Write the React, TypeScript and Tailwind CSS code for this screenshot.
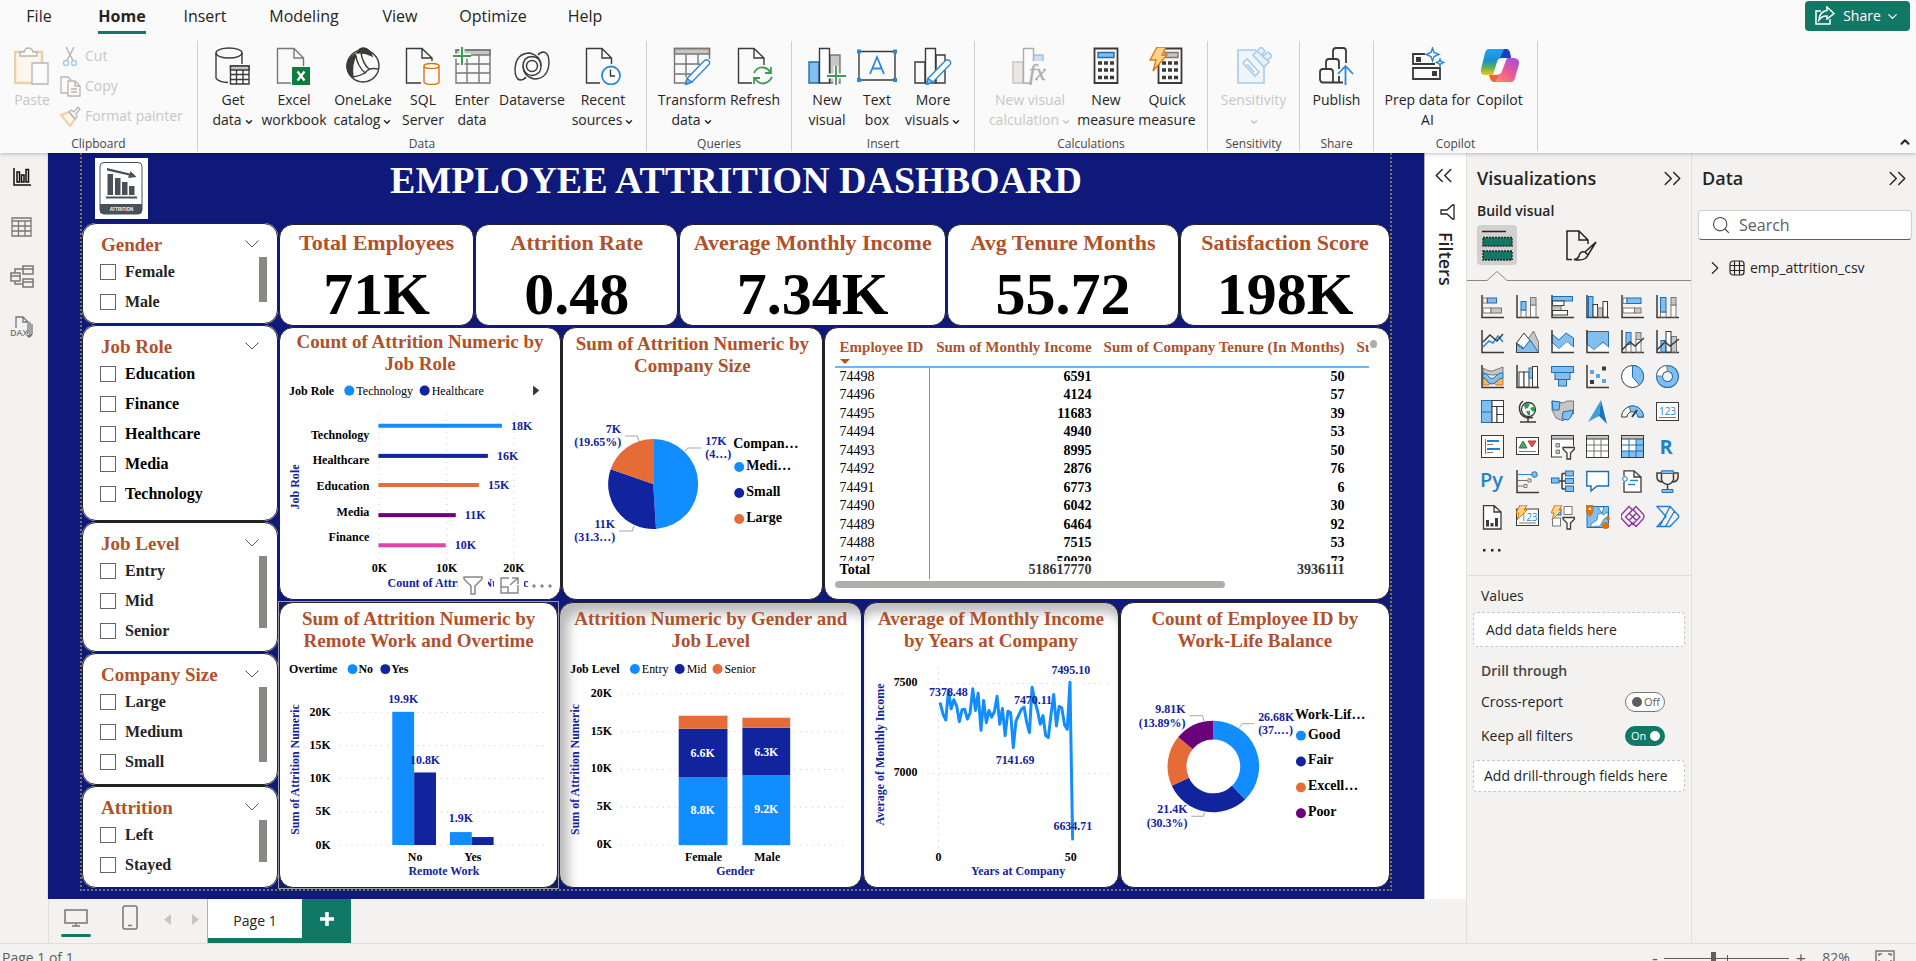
import React from "react";
import { ChevronDown, ChevronUp, ChevronsLeft, ChevronsRight, ChevronRight, Search } from "lucide-react";

const SANS = "font-['Open_Sans','Noto_Sans',sans-serif]";
const SERIF = "font-['Liberation_Serif','Times_New_Roman',serif]";

const BLUE = "#118DFF";
const NAVY = "#12239E";
const ORANGE = "#E66C37";
const PURPLE = "#6B007B";
const PINK = "#E044A7";

const ink = "#3b3a39";
const grey = "#797775";
const fillGrey = "#c8c6c4";
const sky = "#83beec";
const deep = "#1a6fb5";

/* ---------- Ribbon ---------- */

type IconProps = { children: React.ReactNode; w?: number; faded?: boolean };
const RibbonIcon = ({ children, w = 36, faded }: IconProps) => (
  <svg width={w} height="38" viewBox={`0 0 ${w} 38`} fill="none" stroke={ink} strokeWidth="1.4" className={faded ? "opacity-40" : ""} aria-hidden="true">
    {children}
  </svg>
);

const pencil = (
  <>
    <path d="M14 31.500L31.500 13.500Q33.500 12 35.500 13.500Q37.500 15.500 36 17.500L19 35L12.500 37.500Z" fill="#fff" stroke="#2b88d8" />
    <path d="M14 31.500L19 35L12.500 37.500Z" fill={sky} stroke="#2b88d8" />
  </>
);

const icons = {
  getData: (
    <RibbonIcon>
      <ellipse cx="14" cy="6" rx="13" ry="5" />
      <path d="M1 6V31Q3 35 13 35.500M27 6V17" />
      <path d="M15.500 19H34V37H15.500Z" fill="#fff" />
      <path d="M15.500 19H34V23H15.500Z" fill={fillGrey} />
      <path d="M21.500 23V37M28 23V37M15.500 27.500H34M15.500 32.500H34" />
    </RibbonIcon>
  ),
  excel: (
    <RibbonIcon>
      <path d="M15 36H1.500V1.500H18L27.500 11V19M18 1.500V11H27.500" stroke={grey} />
      <rect x="16" y="20" width="18" height="18" fill="#107c41" stroke="none" />
      <path d="M21.500 24.500L28.500 33.500M28.500 24.500L21.500 33.500" stroke="#fff" strokeWidth="2.200" />
    </RibbonIcon>
  ),
  oneLake: (
    <RibbonIcon>
      <circle cx="18" cy="19" r="16" />
      <path d="M12 6Q14 1 19 1Q25 2 27 9Q20 5 12 6ZM10 7Q1 13 2 21Q3 27 8 30Q6 17 11 9Z" fill={ink} />
      <path d="M11 9Q12 18 20 26Q24 20 33 22M20 26Q15 29 8 30M16 6Q18 17 24 22" />
    </RibbonIcon>
  ),
  sql: (
    <RibbonIcon>
      <path d="M16 36H1.500V1.500H17L27 11V14M17 1.500V11H27" />
      <path d="M19 19V35Q20 37.500 26.500 37.500Q33 37.500 34 35V19" fill="#fff" stroke="#d9730d" />
      <ellipse cx="26.500" cy="19" rx="7.500" ry="2.500" fill="#fff" stroke="#d9730d" />
    </RibbonIcon>
  ),
  enter: (
    <RibbonIcon w={40}>
      <path d="M4 3H38V8H4Z" fill={fillGrey} stroke={grey} />
      <path d="M4 3H38V36H4ZM4 17H38M4 26H38M15 8V36M27 8V36" stroke={grey} />
      <path d="M10 0V19M0 9H19" stroke="#fafafa" strokeWidth="5" />
      <path d="M10 0V18M1 9H19" stroke="#3f9a55" strokeWidth="2" />
    </RibbonIcon>
  ),
  dataverse: (
    <RibbonIcon>
      <circle cx="18" cy="19" r="5.500" />
      <path d="M27 19Q27 10 18 9.500Q9 10 9 19Q9 29 20 32Q34 32 35 16Q35 6 30 5Q26 5 24 8" />
      <path d="M9 19Q10 28 18 28.500Q27 28 27 19Q27 9 16 6Q2 6 1 22Q1 32 6 33Q10 33 12 30" />
    </RibbonIcon>
  ),
  recent: (
    <RibbonIcon>
      <path d="M15 36H1.500V1.500H17L26.500 11V17M17 1.500V11H26.500" />
      <circle cx="26" cy="28.500" r="9" fill="#fff" stroke="#2b88d8" strokeWidth="1.800" />
      <path d="M25.500 22.500V29H30" />
    </RibbonIcon>
  ),
  transform: (
    <RibbonIcon w={39}>
      <path d="M1.500 1.500H36.500V7H1.500Z" fill={fillGrey} stroke={grey} />
      <path d="M14 36H1.500V1.500H36.500V12M1.500 17H27M1.500 27H18M13 7V30M25 7V18" stroke={grey} />
      {pencil}
    </RibbonIcon>
  ),
  refresh: (
    <RibbonIcon>
      <path d="M15 36H1.500V1.500H17L27 11V18M17 1.500V11H27" />
      <path d="M17 26Q20 20 26 20.500Q31 21 33 25M34 20V26H28M35 30Q32 36 26 36.500Q20 36 18 31M17 37V31H23" stroke="#3f9a55" strokeWidth="1.800" />
    </RibbonIcon>
  ),
  newVisual: (
    <RibbonIcon w={38}>
      <path d="M1 15H11V36H1Z" fill={sky} stroke={deep} />
      <path d="M22 8H32V36H22Z" fill={fillGrey} stroke={grey} />
      <path d="M11.500 1.500H21.500V36H11.500Z" fill="#fff" />
      <path d="M28 19V38M18 29H38" stroke="#fafafa" strokeWidth="5" />
      <path d="M28 19V38M19 29H38" stroke="#3f9a55" strokeWidth="1.800" />
    </RibbonIcon>
  ),
  textBox: (
    <RibbonIcon w={40}>
      <path d="M2 4.500H38V33H2Z" fill="#fafafa" />
      <path d="M13 27L20 10L27 27M15.500 21.500H24.500" stroke="#2b88d8" strokeWidth="1.800" />
      <path d="M0 2.500H4V6.500H0ZM36 2.500H40V6.500H36ZM0 31H4V35H0ZM36 31H40V35H36Z" fill="#2b88d8" stroke="none" />
    </RibbonIcon>
  ),
  moreVisuals: (
    <RibbonIcon w={38}>
      <path d="M1 15H11V36H1ZM22 8H31V36H22Z" />
      <path d="M11.500 1.500H21.500V36H11.500Z" fill="#fff" />
      {pencil}
    </RibbonIcon>
  ),
  calc: (
    <RibbonIcon w={38} faded>
      <path d="M2 15H12V36H2Z" fill="#d0cecc" stroke={grey} />
      <path d="M22 8H32V18H22Z" fill={sky} stroke={deep} />
      <path d="M12.500 1.500H22.500V36H12.500Z" fill="#fff" />
      <path d="M21 14H36V38H21Z" fill="#fafafa" stroke="none" />
      <text x="18" y="33" fontFamily="Liberation Serif" fontStyle="italic" fontSize="23" fill={ink} stroke={ink} strokeWidth="0.500">fx</text>
    </RibbonIcon>
  ),
  measure: (
    <RibbonIcon w={28}>
      <path d="M2.500 1.500H25.500V36H2.500Z" strokeWidth="1.800" />
      <path d="M6 5.500H22V10.500H6Z" fill={sky} stroke={deep} />
      <path d="M6 16H22M6 23H22M6 30.500H22" strokeWidth="3.500" strokeDasharray="4 2" />
    </RibbonIcon>
  ),
  quick: (
    <RibbonIcon>
      <path d="M9.500 1.500H32.500V36H9.500Z" strokeWidth="1.800" />
      <path d="M16 5.500H29V10.500H16Z" fill={fillGrey} stroke={grey} />
      <path d="M13 16H29M13 23H29M13 30.500H29" strokeWidth="3.500" strokeDasharray="4 2" />
      <path d="M8 0H17L13 8H18L4 24L7 13H1Z" fill="#ffd28a" stroke="#e07b10" />
    </RibbonIcon>
  ),
  sensitivity: (
    <RibbonIcon faded>
      <g stroke="#2b88d8" strokeWidth="1.600">
        <path d="M20 3H2V36H28V20" fill="#e3f0fa" />
        <path d="M7 16L11 12L23 25L19 29ZM11 17L18 25" fill="#fff" />
        <path d="M17 8L21 4L33 15L28 20ZM21 4L25 0L29 4L26 8M27 9L32 5L36 9L31 14" fill="#cfe6f7" />
      </g>
    </RibbonIcon>
  ),
  publish: (
    <RibbonIcon>
      <path d="M15 35.500H4Q1 35.500 1 32V25Q1 22 4 22H11Q14 22 14 25V35.500M7 22V15Q7 12 10 12H17Q20 12 20 15V22M14 12V4Q14 1 17 1H24Q27 1 27 4V16M14 35.500H24M20 29V35" strokeWidth="1.800" />
      <path d="M26.500 38V20M19 27L26.500 19L34 27" stroke="#2b88d8" strokeWidth="1.800" />
    </RibbonIcon>
  ),
  prep: (
    <RibbonIcon w={34}>
      <path d="M14 7H2V17H24M2 21H29V32H2Z" strokeWidth="1.800" />
      <path d="M5 10H10V15H5ZM21 24H26V29H21Z" fill={ink} stroke="none" />
      <path d="M21.500 1L23 5.500L28 7.500L23 9.500L21.500 14L20 9.500L15 7.500L20 5.500ZM29 12L30 14.500L32.500 15.500L30 16.500L29 19L28 16.500L25.500 15.500L28 14.500Z" fill="#fafafa" stroke="#2b88d8" />
    </RibbonIcon>
  ),
  copilot: (
    <RibbonIcon w={40}>
      <defs>
        <linearGradient id="cpA" x1="0" y1="0" x2="0" y2="1"><stop offset="0" stopColor="#1ba7f0" /><stop offset="0.450" stopColor="#1c8fd0" /><stop offset="0.700" stopColor="#59b05a" /><stop offset="1" stopColor="#f5c518" /></linearGradient>
        <linearGradient id="cpB" x1="1" y1="0" x2="0" y2="1"><stop offset="0" stopColor="#9a4be8" /><stop offset="0.500" stopColor="#ee5a92" /><stop offset="1" stopColor="#ffa24a" /></linearGradient>
      </defs>
      <g stroke="none">
        <path d="M9 2H26Q29 2 30 6L31 11H22Q18 11 17 15L13 28H5Q0 28 1 22L5 6Q6 2 9 2Z" fill="url(#cpA)" />
        <path d="M24 2H26Q29 2 30 6L31 11H22Q20 11 20 11Z" fill="#1740c4" />
        <path d="M31 35H15Q11 35 10 30L9 28H17Q21 28 22 24L27 11H34Q40 12 39 17L35 31Q34 35 31 35Z" fill="url(#cpB)" />
        <path d="M9 28H17L20 27L15 35Q11 35 10 31Z" fill="#f0603a" />
        <path d="M18.500 13H23L19 26Q18.500 28 14 28Z" fill="#fff" />
      </g>
    </RibbonIcon>
  ),
};

type Cmd = { icon: keyof typeof icons; lines: string[]; w: string; menu?: boolean; off?: boolean };
const groups: { name: string; w: string; items: Cmd[] }[] = [
  {
    name: "Data", w: "w-[449px]",
    items: [
      { icon: "getData", lines: ["Get", "data"], w: "w-[54px]", menu: true },
      { icon: "excel", lines: ["Excel", "workbook"], w: "w-[68px]" },
      { icon: "oneLake", lines: ["OneLake", "catalog"], w: "w-[70px]", menu: true },
      { icon: "sql", lines: ["SQL", "Server"], w: "w-[50px]" },
      { icon: "enter", lines: ["Enter", "data"], w: "w-[48px]" },
      { icon: "dataverse", lines: ["Dataverse"], w: "w-[72px]" },
      { icon: "recent", lines: ["Recent", "sources"], w: "w-[70px]", menu: true },
    ],
  },
  {
    name: "Queries", w: "w-[145px]",
    items: [
      { icon: "transform", lines: ["Transform", "data"], w: "w-[72px]", menu: true },
      { icon: "refresh", lines: ["Refresh"], w: "w-[54px]" },
    ],
  },
  {
    name: "Insert", w: "w-[183px]",
    items: [
      { icon: "newVisual", lines: ["New", "visual"], w: "w-[52px]" },
      { icon: "textBox", lines: ["Text", "box"], w: "w-[48px]" },
      { icon: "moreVisuals", lines: ["More", "visuals"], w: "w-[64px]", menu: true },
    ],
  },
  {
    name: "Calculations", w: "w-[233px]",
    items: [
      { icon: "calc", lines: ["New visual", "calculation"], w: "w-[88px]", menu: true, off: true },
      { icon: "measure", lines: ["New", "measure"], w: "w-[64px]" },
      { icon: "quick", lines: ["Quick", "measure"], w: "w-[58px]" },
    ],
  },
  { name: "Sensitivity", w: "w-[92px]", items: [{ icon: "sensitivity", lines: ["Sensitivity", ""], w: "w-[76px]", menu: true, off: true }] },
  { name: "Share", w: "w-[74px]", items: [{ icon: "publish", lines: ["Publish"], w: "w-[64px]" }] },
  {
    name: "Copilot", w: "w-[164px]",
    items: [
      { icon: "prep", lines: ["Prep data for", "AI"], w: "w-[88px]" },
      { icon: "copilot", lines: ["Copilot"], w: "w-[56px]" },
    ],
  },
];

function RibbonButton({ cmd }: { cmd: Cmd }) {
  return (
    <button disabled={cmd.off} className={`flex flex-col items-center gap-[5px] ${cmd.w} ${cmd.off ? "text-[#c8c6c4]" : "text-[#252423]"}`}>
      {icons[cmd.icon]}
      <span className="flex flex-col items-center text-sm leading-5 whitespace-nowrap">
        {cmd.lines.map((line, i) => (
          <span key={i} className="flex h-5 items-center">
            {line}
            {cmd.menu && i === cmd.lines.length - 1 && <ChevronDown size={10} strokeWidth={3.5} className="mt-1 ml-0.5" />}
          </span>
        ))}
      </span>
    </button>
  );
}

const tabs = [
  { name: "File", cls: "w-[62px] mr-[11px]" },
  { name: "Home", cls: "w-[82px]" },
  { name: "Insert", cls: "w-[84px]" },
  { name: "Modeling", cls: "w-[114px]" },
  { name: "View", cls: "w-[78px]" },
  { name: "Optimize", cls: "w-[108px]" },
  { name: "Help", cls: "w-[76px]" },
];

const groupLabel = "text-center text-xs leading-[14px] text-[#484644]";

function Ribbon() {
  return (
    <header className="relative z-20 h-[153px] shrink-0 bg-[#fafafa] text-[#252423] shadow-[0_1px_4px_rgba(0,0,0,0.25)]">
      <div className="flex h-[41px] items-start justify-between pr-1.5 pl-2">
        <nav className="flex text-base">
          {tabs.map((t) => (
            <button key={t.name} className={`flex h-[34px] flex-col items-center justify-between ${t.cls}`}>
              <span className={`flex h-8 items-center ${t.name === "Home" ? "font-bold" : ""}`}>{t.name}</span>
              {t.name === "Home" && <span className="h-[3px] w-12 bg-[#117865]" />}
            </button>
          ))}
        </nav>
        <button className="mt-px flex h-[30px] w-[105px] items-center justify-center gap-2 rounded bg-[#117865] text-sm text-white">
          <svg width="20" height="20" viewBox="0 0 20 20" fill="none" stroke="currentColor" strokeWidth="1.500" aria-hidden="true">
            <path d="M6 5H1V18H15V13M12 1L19 7.500L12 13V10Q7 9.500 4 14Q4.500 5.500 12 4.500Z" />
          </svg>
          <span className="flex items-center gap-1">Share <ChevronDown size={15} /></span>
        </button>
      </div>
      <div className="flex items-end">
        <section className="flex h-[110px] w-[198px] flex-col justify-between border-r border-[#d2d0ce] text-[#c8c6c4]">
          <div className="flex items-start">
            <button disabled className="flex w-[60px] flex-col items-center gap-[5px] pt-1.5 pl-1 text-sm leading-5">
              <svg width="36" height="38" viewBox="0 0 36 38" fill="none" strokeWidth="1.400" aria-hidden="true">
                <path d="M1 5H28V36H1Z" stroke="#f0cfa6" strokeWidth="2.500" fill="#fdf6ec" />
                <path d="M6 9V5H10Q11 1 14.500 1Q18 1 19 5H23V9Z" stroke="#b8b6b4" fill="#fafafa" />
                <path d="M18 16H34V37H18Z" stroke="#b8b6b4" fill="#fafafa" />
              </svg>
              Paste
            </button>
            <div className="flex flex-col text-sm">
              <button disabled className="flex h-[30px] items-center gap-1">
                <svg width="21" height="21" viewBox="0 0 21 21" fill="none" stroke="#b8b6b4" aria-hidden="true">
                  <path d="M6 1L13 14.500M14 1L7 14.500" strokeWidth="1.500" />
                  <circle cx="6" cy="17" r="2.500" stroke="#a9cbe6" strokeWidth="1.500" />
                  <circle cx="14" cy="17" r="2.500" stroke="#a9cbe6" strokeWidth="1.500" />
                </svg>
                Cut
              </button>
              <button disabled className="flex h-[30px] items-center gap-1">
                <svg width="21" height="21" viewBox="0 0 21 21" fill="none" stroke="#b8b6b4" strokeWidth="1.300" aria-hidden="true">
                  <path d="M8 17H1V1H8L11 4M8 5H15L20 10V20H8ZM15 5V10H20M11 13H17M11 16H17" />
                </svg>
                Copy
              </button>
              <button disabled className="flex h-[30px] items-center gap-1">
                <svg width="21" height="21" viewBox="0 0 21 21" fill="none" stroke="#b8b6b4" strokeWidth="1.300" aria-hidden="true">
                  <path d="M1 9L9 6L15 13L10 20Z" stroke="#f0cfa6" strokeWidth="2" fill="#fdf6ec" />
                  <path d="M9 6L11 4L14 6L18 1L20 3L16 8L17 11L15 13Z" />
                </svg>
                Format painter
              </button>
            </div>
          </div>
          <h2 className={groupLabel}>Clipboard</h2>
        </section>
        {groups.map((g) => (
          <section key={g.name} className={`flex h-[110px] flex-col justify-between border-r border-[#d2d0ce] ${g.w}`}>
            <div className="flex justify-center pt-1.5">
              {g.items.map((c, i) => <RibbonButton key={i} cmd={c} />)}
            </div>
            <h2 className={groupLabel}>{g.name}</h2>
          </section>
        ))}
        <button aria-label="Collapse ribbon" className="mr-1 mb-0.5 ml-auto"><ChevronUp size={14} strokeWidth={3.5} /></button>
      </div>
    </header>
  );
}

/* ---------- Left rail ---------- */

function Rail() {
  const b = "flex h-6 w-6 items-center justify-center";
  return (
    <nav className="flex w-12 shrink-0 flex-col items-center gap-[26px] border-r border-[#e1dfdd] bg-[#f3f2f1] pt-3 pr-1">
      <button aria-label="Report view" className={b}>
        <svg width="18" height="18" viewBox="0 0 18 18" fill="none" stroke="#111" strokeWidth="1.500"><path d="M1 0V17H18M4 4H6.500V14H4ZM8.500 7H11V14H8.500ZM13 1.500H15.500V14H13Z" /></svg>
      </button>
      <button aria-label="Table view" className={b}>
        <svg width="21" height="20" viewBox="0 0 21 20" fill="none" stroke={grey} strokeWidth="1.300"><path d="M1 1H20V19H1ZM1 4H20M1 9H20M1 14H20M7.500 4V19M14 4V19" /></svg>
      </button>
      <button aria-label="Model view" className={b}>
        <svg width="24" height="24" viewBox="0 0 24 24" fill="none" stroke={grey} strokeWidth="1.500"><path d="M13 1H23V9H13ZM13 4H23M13 14H23V22H13ZM13 17H23M1 8H10V16H1ZM1 11H10M5 8V4H13M5 16V19H13" /></svg>
      </button>
      <button aria-label="DAX query view" className={b}>
        <svg width="24" height="22" viewBox="0 0 24 22" fill="none" stroke={grey} strokeWidth="1.300">
          <path d="M6 12V1H13L18 6V17H17M13 1V6H18M20 6V18Q20 20 17 20M22 8V18Q21 21 18 21" />
          <text x="0" y="20" fontFamily="Open Sans" fontSize="9" fontWeight="600" fill={grey} stroke="none">DAX</text>
        </svg>
      </button>
    </nav>
  );
}

/* ---------- Report visuals ---------- */

const card = "relative flex min-h-0 min-w-0 flex-col overflow-hidden rounded-[14px] border border-[#252423] bg-white";

const slicers = [
  { title: "Gender", items: ["Female", "Male"], grow: "flex-[100_1_0%]", bar: "h-[45px]", ink: "text-[#252423]" },
  { title: "Job Role", items: ["Education", "Finance", "Healthcare", "Media", "Technology"], grow: "flex-[197_1_0%]", bar: "", ink: "text-black" },
  { title: "Job Level", items: ["Entry", "Mid", "Senior"], grow: "flex-[130_1_0%]", bar: "h-[72px]", ink: "text-[#252423]" },
  { title: "Company Size", items: ["Large", "Medium", "Small"], grow: "flex-[132_1_0%]", bar: "h-[75px]", ink: "text-[#252423]" },
  { title: "Attrition", items: ["Left", "Stayed"], grow: "flex-[101_1_0%]", bar: "h-[42px]", ink: "text-[#252423]" },
];

function Slicer({ s }: { s: (typeof slicers)[number] }) {
  return (
    <fieldset className={`${card} ${s.grow}`}>
      <div className="flex h-[33px] shrink-0 items-end justify-between pr-[18px] pl-[18px]">
        <span className="text-[19px] leading-6 font-bold text-[#b0512a]">{s.title}</span>
        <button aria-label={`Expand ${s.title}`} className="mb-[9px]">
          <svg width="14" height="8" viewBox="0 0 14 8" fill="none" stroke="#555"><path d="M0.500 0.500L7 7L13.500 0.500" /></svg>
        </button>
      </div>
      <div className="flex items-start justify-between pr-[10px] pl-[17px]">
        <div className="flex flex-col">
          {s.items.map((item) => (
            <label key={item} className={`flex h-[30px] items-center gap-[9px] text-base font-bold ${s.ink}`}>
              <input type="checkbox" className="h-4 w-4 appearance-none border border-[#666] bg-white" />
              {item}
            </label>
          ))}
        </div>
        {s.bar && <span className={`w-2 bg-[#8a8886] ${s.bar}`} />}
      </div>
    </fieldset>
  );
}

const kpis = [
  { title: "Total Employees", value: "71K", grow: "flex-[195_1_0%]" },
  { title: "Attrition Rate", value: "0.48", grow: "flex-[203_1_0%]" },
  { title: "Average Monthly Income", value: "7.34K", grow: "flex-[267_1_0%]" },
  { title: "Avg Tenure Months", value: "55.72", grow: "flex-[232_1_0%]" },
  { title: "Satisfaction Score", value: "198K", grow: "flex-[210_1_0%]" },
];

function VisualTitle({ lines, tight }: { lines: [string, string]; tight?: boolean }) {
  return (
    <h2 className={`shrink-0 text-center text-[19px] leading-[22px] font-bold whitespace-nowrap text-[#b0512a] ${tight ? "pt-[3px]" : "pt-[5px]"}`}>
      {lines[0]}<br />{lines[1]}
    </h2>
  );
}

type TProps = { x: number; y: number; children: React.ReactNode; a?: "start" | "middle" | "end"; c?: string; s?: number; w?: number; v?: boolean };
const T = ({ x, y, children, a = "start", c = "#000", s = 12, w = 700, v }: TProps) => (
  <text x={x} y={y + 4} textAnchor={a} fill={c} fontSize={s} fontWeight={w} transform={v ? `rotate(-90 ${x} ${y})` : undefined}>
    {children}
  </text>
);

const Chart = ({ w, h, label, children }: { w: number; h: number; label: string; children: React.ReactNode }) => (
  <svg viewBox={`0 0 ${w} ${h}`} className="min-h-0 w-full flex-1" role="img" aria-label={label} fontFamily="Liberation Serif, Times New Roman, serif">
    {children}
  </svg>
);

const Dots = ({ d }: { d: string }) => <path d={d} stroke="#c8c6c4" strokeDasharray="1 5" fill="none" />;

const roles = [
  { name: "Technology", v: "18K", end: 221, bar: 50, label: 59, color: BLUE },
  { name: "Healthcare", v: "16K", end: 207, bar: 80, label: 84, color: NAVY },
  { name: "Education", v: "15K", end: 198, bar: 109, label: 110, color: ORANGE },
  { name: "Media", v: "11K", end: 175, bar: 139, label: 136, color: PURPLE },
  { name: "Finance", v: "10K", end: 165, bar: 169, label: 161, color: PINK },
];

function JobRoleChart() {
  return (
    <Chart w={279} h={222} label="Count of Attrition Numeric by Job Role">
      <T x={9} y={15}>Job Role</T>
      <circle cx="69" cy="15" r="5" fill={BLUE} />
      <T x={76} y={15} w={400}>Technology</T>
      <circle cx="144" cy="15" r="5" fill={NAVY} />
      <T x={151} y={15} w={400}>Healthcare</T>
      <path d="M252 10L258 15L252 20Z" fill="#333" />
      <Dots d="M98.500 38V183M166 38V183M233 38V183" />
      {roles.map((r) => (
        <g key={r.name}>
          <rect x="98" y={r.bar - 2} width={r.end - 98} height="4" fill={r.color} />
          <T x={r.end + 9} y={r.bar} c={NAVY}>{r.v}</T>
          <T x={89} y={r.label} a="end">{r.name}</T>
        </g>
      ))}
      <T x={15} y={111} a="middle" c={NAVY} v>Job Role</T>
      <T x={99} y={192} a="middle">0K</T>
      <T x={166} y={192} a="middle">10K</T>
      <T x={233} y={192} a="middle">20K</T>
      <T x={107} y={207} c={NAVY}>Count of Attrition Numeric</T>
    </Chart>
  );
}

const slice = (cx: number, cy: number, r: number, from: number, to: number, inner = 0) => {
  const p = (rad: number, t: number) => `${cx + rad * Math.sin(t * 2 * Math.PI)} ${cy - rad * Math.cos(t * 2 * Math.PI)}`;
  const big = to - from > 0.5 ? 1 : 0;
  return inner
    ? `M${p(r, from)}A${r} ${r} 0 ${big} 1 ${p(r, to)}L${p(inner, to)}A${inner} ${inner} 0 ${big} 0 ${p(inner, from)}Z`
    : `M${cx} ${cy}L${p(r, from)}A${r} ${r} 0 ${big} 1 ${p(r, to)}Z`;
};

function CompanySizeChart() {
  return (
    <Chart w={258} h={222} label="Sum of Attrition Numeric by Company Size">
      <path d={slice(90, 107, 45, 0, 0.49)} fill={BLUE} />
      <path d={slice(90, 107, 45, 0.49, 0.8035)} fill={NAVY} />
      <path d={slice(90, 107, 45, 0.8035, 1)} fill={ORANGE} />
      <path d="M62 59H74L76 64M122 74L125 71H138M56 154H69L71 149" stroke="#a9a7a5" fill="none" />
      <T x={58} y={52} a="end" c={NAVY}>7K</T>
      <T x={58} y={65} a="end" c={NAVY}>(19.65%)</T>
      <T x={142} y={64} c={NAVY}>17K</T>
      <T x={142} y={77} c={NAVY}>(4…)</T>
      <T x={52} y={147} a="end" c={NAVY}>11K</T>
      <T x={52} y={160} a="end" c={NAVY}>(31.3…)</T>
      <T x={170} y={67} s={14}>Compan…</T>
      {[["Medi…", BLUE], ["Small", NAVY], ["Large", ORANGE]].map(([n, c], i) => (
        <g key={n}>
          <circle cx="176" cy={90 + i * 26} r="5" fill={c} />
          <T x={183} y={89 + i * 26} s={14}>{n}</T>
        </g>
      ))}
    </Chart>
  );
}

function RemoteChart() {
  return (
    <Chart w={279} h={236} label="Sum of Attrition Numeric by Remote Work and Overtime">
      <T x={9} y={17}>Overtime</T>
      <circle cx="73" cy="17" r="5" fill={BLUE} />
      <T x={79} y={17}>No</T>
      <circle cx="106" cy="17" r="5" fill={NAVY} />
      <T x={112} y={17}>Yes</T>
      <Dots d="M60 60.500H268M60 94H268M60 127H268M60 161H268M60 194H268" />
      {["20K", "15K", "10K", "5K", "0K"].map((t, i) => <T key={t} x={51} y={60 + Math.round(i * 33.4)} a="end">{t}</T>)}
      <rect x="113" y="60" width="22" height="134" fill={BLUE} />
      <rect x="135" y="121" width="22" height="73" fill={NAVY} />
      <rect x="171" y="181" width="22" height="13" fill={BLUE} />
      <rect x="193" y="186" width="22" height="8" fill={NAVY} />
      <T x={124} y={47} a="middle" c={NAVY}>19.9K</T>
      <T x={146} y={108} a="middle" c={NAVY}>10.8K</T>
      <T x={182} y={167} a="middle" c={NAVY}>1.9K</T>
      <T x={136} y={206} a="middle">No</T>
      <T x={194} y={206} a="middle">Yes</T>
      <T x={165} y={220} a="middle" c={NAVY}>Remote Work</T>
      <T x={15} y={118} a="middle" c={NAVY} v>Sum of Attrition Numeric</T>
    </Chart>
  );
}

function GenderChart() {
  return (
    <Chart w={300} h={236} label="Attrition Numeric by Gender and Job Level">
      <T x={9} y={17}>Job Level</T>
      <circle cx="74" cy="17" r="5" fill={BLUE} />
      <T x={81} y={17} w={400}>Entry</T>
      <circle cx="119" cy="17" r="5" fill={NAVY} />
      <T x={126} y={17} w={400}>Mid</T>
      <circle cx="157" cy="17" r="5" fill={ORANGE} />
      <T x={164} y={17} w={400}>Senior</T>
      <Dots d="M60 42H288M60 80H288M60 118H288M60 156H288M60 194H288" />
      {["20K", "15K", "10K", "5K", "0K"].map((t, i) => <T key={t} x={51} y={41 + i * 38} a="end">{t}</T>)}
      <rect x="118" y="126" width="49" height="68" fill={BLUE} />
      <rect x="118" y="77" width="49" height="49" fill={NAVY} />
      <rect x="118" y="64" width="49" height="13" fill={ORANGE} />
      <rect x="182" y="124" width="48" height="70" fill={BLUE} />
      <rect x="182" y="76" width="48" height="48" fill={NAVY} />
      <rect x="182" y="66" width="48" height="10" fill={ORANGE} />
      <T x={142} y={159} a="middle" c="#fff">8.8K</T>
      <T x={142} y={101} a="middle" c="#fff">6.6K</T>
      <T x={206} y={158} a="middle" c="#fff">9.2K</T>
      <T x={206} y={100} a="middle" c="#fff">6.3K</T>
      <T x={143} y={206} a="middle">Female</T>
      <T x={207} y={206} a="middle">Male</T>
      <T x={175} y={220} a="middle" c={NAVY}>Gender</T>
      <T x={14} y={118} a="middle" c={NAVY} v>Sum of Attrition Numeric</T>
    </Chart>
  );
}

const income = [
  7384, 7325, 7294, 7458, 7356, 7406, 7371, 7285, 7351, 7353, 7299, 7334, 7467, 7347, 7443, 7237, 7402, 7279, 7347, 7310,
  7340, 7426, 7270, 7358, 7207, 7343, 7334, 7141, 7288, 7321, 7353, 7366, 7279, 7224, 7476, 7399, 7343, 7270, 7318, 7207,
  7196, 7325, 7436, 7261, 7369, 7362, 7266, 7242, 7503, 6633,
];

function IncomeChart() {
  const pts = income.map((v, i) => `${(76 + i * 2.71).toFixed(1)},${(31 + (7500 - v) * 0.181).toFixed(1)}`).join(" ");
  return (
    <Chart w={253} h={236} label="Average of Monthly Income by Years at Company">
      <Dots d="M63 31.500H244M63 122H244M74 15V196M207 15V196" />
      <polyline points={pts} fill="none" stroke={BLUE} strokeWidth="3" strokeLinejoin="round" strokeLinecap="round" />
      <T x={53} y={30} a="end">7500</T>
      <T x={53} y={121} a="end">7000</T>
      <T x={84} y={40} a="middle" c={NAVY}>7378.48</T>
      <T x={169} y={48} a="middle" c={NAVY}>7470.11</T>
      <T x={151} y={108} a="middle" c={NAVY}>7141.69</T>
      <T x={207} y={18} a="middle" c={NAVY}>7495.10</T>
      <T x={209} y={175} a="middle" c={NAVY}>6634.71</T>
      <T x={74} y={206} a="middle">0</T>
      <T x={207} y={206} a="middle">50</T>
      <T x={154} y={220} a="middle" c={NAVY}>Years at Company</T>
      <T x={15} y={103} a="middle" c={NAVY} v>Average of Monthly Income</T>
    </Chart>
  );
}

function BalanceChart() {
  return (
    <Chart w={268} h={236} label="Count of Employee ID by Work-Life Balance">
      <path d={slice(92, 115, 46, 0, 0.378, 27)} fill={BLUE} />
      <path d={slice(92, 115, 46, 0.378, 0.681, 27)} fill={NAVY} />
      <path d={slice(92, 115, 46, 0.681, 0.861, 27)} fill={ORANGE} />
      <path d={slice(92, 115, 46, 0.861, 1, 27)} fill={PURPLE} />
      <path d="M68 64H81L83 70M118 76L121 72H133M70 165H82L83 161" stroke="#a9a7a5" fill="none" />
      <T x={64} y={57} a="end" c={NAVY}>9.81K</T>
      <T x={64} y={71} a="end" c={NAVY}>(13.89%)</T>
      <T x={137} y={65} c={NAVY}>26.68K</T>
      <T x={137} y={78} c={NAVY}>(37.…)</T>
      <T x={66} y={158} a="end" c={NAVY}>21.4K</T>
      <T x={66} y={172} a="end" c={NAVY}>(30.3%)</T>
      <T x={174} y={63} s={14}>Work-Lif…</T>
      {[["Good", BLUE], ["Fair", NAVY], ["Excell…", ORANGE], ["Poor", PURPLE]].map(([n, c], i) => (
        <g key={n}>
          <circle cx="180" cy={84 + i * 26} r="5" fill={c} />
          <T x={187} y={83 + i * 26} s={14}>{n}</T>
        </g>
      ))}
    </Chart>
  );
}

const rows = [
  ["74498", "6591", "50"], ["74496", "4124", "57"], ["74495", "11683", "39"], ["74494", "4940", "53"], ["74493", "8995", "50"],
  ["74492", "2876", "76"], ["74491", "6773", "6"], ["74490", "6042", "30"], ["74489", "6464", "92"], ["74488", "7515", "53"], ["74487", "50030", "73"],
];

function EmployeeTable() {
  const row = "grid grid-cols-[95px_168px_253px_1fr]";
  const first = "border-r border-[#4a9ff0] pl-[5px] text-left font-normal";
  return (
    <div className="flex flex-col pt-2.5 pr-5 pl-2.5 text-sm text-black">
      <table className="block w-full">
        <thead className="block border-b-2 border-[#6db5f9]">
          <tr className={`${row} h-7 overflow-hidden text-[15px] leading-[19px] whitespace-nowrap text-[#b0512a]`}>
            <th scope="col" className="pl-[5px] text-left font-bold">
              Employee ID
              <svg width="10" height="5" viewBox="0 0 10 5" className="mt-0.5"><path d="M0 0H10L5 5Z" fill="#b0512a" /></svg>
            </th>
            <th scope="col" className="pr-1.5 text-right">Sum of Monthly Income</th>
            <th scope="col" className="pr-1.5 text-right">Sum of Company Tenure (In Months)</th>
            <th scope="col" className="overflow-hidden pl-1.5 text-left">Su</th>
          </tr>
        </thead>
        <tbody className="grid max-h-[193px] auto-rows-[18px_19px] overflow-hidden leading-[17px]">
          {rows.map((r) => (
            <tr key={r[0]} className={row}>
              <th scope="row" className={first}>{r[0]}</th>
              <td className="pr-1.5 text-right font-bold">{r[1]}</td>
              <td className="pr-1.5 text-right font-bold">{r[2]}</td>
            </tr>
          ))}
        </tbody>
        <tfoot className="block leading-[18px]">
          <tr className={row}>
            <th scope="row" className={`${first} font-bold!`}>Total</th>
            <td className="pr-1.5 text-right font-bold text-[#333]">518617770</td>
            <td className="pr-1.5 text-right font-bold text-[#333]">3936111</td>
          </tr>
        </tfoot>
      </table>
      <div className="mt-0.5 flex"><span className="h-[7px] w-[73%] rounded-full bg-[#b0aeac]" /></div>
      <span className="absolute top-3 right-3 h-2 w-[7px] rounded-full bg-[#b0aeac]" />
    </div>
  );
}

function Report() {
  return (
    <main className={`flex min-h-0 min-w-0 flex-1 flex-col border-r border-[#b3b0ad] bg-[#0e1979] pr-8 pb-2 pl-8 ${SERIF}`}>
      <div className="flex min-h-0 flex-1 flex-col border-x-2 border-b-2 border-dotted border-[#77745f] pb-px">
        <div className="relative flex h-[70px] shrink-0 items-start justify-center pt-[5px]">
          <svg className="absolute top-[5px] left-[13px]" width="53" height="61" viewBox="0 0 53 61" role="img" aria-label="Attrition">
            <path d="M0 0H53V61H0Z" fill="#fff" />
            <rect x="5" y="4.500" width="42" height="51.500" rx="4" fill="#fff" stroke="#4a5058" />
            <path d="M5 46H47V52Q47 56 43 56H9Q5 56 5 52Z" fill="#4a5058" />
            <path d="M12.500 16H18V37H12.500ZM20 20H25.500V37H20ZM27 24H32.500V37H27ZM34 28H39.500V37H34ZM11 38.500H42V40.500H11ZM12 10L35 15.500L35.500 13L41.500 19L33 20L34 17.500L12 12.500Z" fill="#4a5058" />
            <text x="26.500" y="53" textAnchor="middle" fontFamily="Liberation Sans" fontSize="4.500" fontWeight="700" fill="#fff">ATTRITION</text>
          </svg>
          <h1 className="text-[38px] leading-[44px] font-bold text-white">EMPLOYEE ATTRITION DASHBOARD</h1>
        </div>
        <div className="flex min-h-0 flex-1 gap-px">
          <div className="flex w-[196px] shrink-0 flex-col gap-px">
            {slicers.map((s) => <Slicer key={s.title} s={s} />)}
          </div>
          <div className="flex min-w-0 flex-1 flex-col gap-px pt-px">
            <div className="flex flex-[100_1_0%] gap-px">
              {kpis.map((k) => (
                <section key={k.title} className={`${card} items-center whitespace-nowrap ${k.grow}`}>
                  <h2 className="pt-1 text-[22px] leading-7 font-bold text-[#b0512a]">{k.title}</h2>
                  <p className="pt-1.5 text-[60px] leading-[62px] font-bold text-black">{k.value}</p>
                </section>
              ))}
            </div>
            <div className="flex min-h-0 flex-[275_1_0%] gap-px pb-px">
              <section className={`${card} flex-[282_1_0%]`}>
                <VisualTitle tight lines={["Count of Attrition Numeric by", "Job Role"]} />
                <JobRoleChart />
                <div className="absolute right-1.5 bottom-0 flex h-[27px] gap-1.5">
                  <button aria-label="Filters on visual" className="flex w-[30px] items-center justify-center bg-white">
                    <svg width="20" height="19" viewBox="0 0 20 19" fill="#fff" stroke="#888" strokeWidth="1.500"><path d="M1 1H19V3L12 10V18H8V10L1 3Z" /></svg>
                  </button>
                  <button aria-label="Focus mode" className="flex w-[30px] items-center justify-center bg-white">
                    <svg width="19" height="17" viewBox="0 0 19 17" fill="none" stroke="#888" strokeWidth="1.500"><path d="M9 1H1V16H18V8M12 1H18V7M18 1L10 8M1 10H8V16" /></svg>
                  </button>
                  <button aria-label="More options" className="flex w-6 items-center justify-center bg-white">
                    <svg width="20" height="4" viewBox="0 0 20 4" fill="#888"><circle cx="2" cy="2" r="1.700" /><circle cx="10" cy="2" r="1.700" /><circle cx="18" cy="2" r="1.700" /></svg>
                  </button>
                </div>
              </section>
              <section className={`${card} flex-[260_1_0%]`}>
                <VisualTitle lines={["Sum of Attrition Numeric by", "Company Size"]} />
                <CompanySizeChart />
              </section>
              <section className={`${card} flex-[568_1_0%]`}>
                <EmployeeTable />
              </section>
            </div>
            <div className="flex min-h-0 flex-[288_1_0%] gap-px">
              <div className="flex min-w-0 flex-[281_1_0%] bg-[#141e63] ring-1 ring-[#9a9ab0]">
                <section className={`${card} flex-1`}>
                  <VisualTitle lines={["Sum of Attrition Numeric by", "Remote Work and Overtime"]} />
                  <RemoteChart />
                </section>
              </div>
              <section className={`${card} flex-[303_1_0%] shadow-[inset_8px_10px_12px_rgba(0,0,0,0.28)]`}>
                <VisualTitle lines={["Attrition Numeric by Gender and", "Job Level"]} />
                <GenderChart />
              </section>
              <section className={`${card} flex-[255_1_0%] shadow-[inset_0_14px_10px_-4px_rgba(0,0,0,0.25)]`}>
                <VisualTitle lines={["Average of Monthly Income", "by Years at Company"]} />
                <IncomeChart />
              </section>
              <section className={`${card} flex-[270_1_0%]`}>
                <VisualTitle lines={["Count of Employee ID by", "Work-Life Balance"]} />
                <BalanceChart />
              </section>
            </div>
          </div>
        </div>
      </div>
    </main>
  );
}

/* ---------- Visual gallery ---------- */

const axis = <path d="M1 0V22.500H23" stroke={ink} strokeWidth="1.500" />;
const R = ({ x, y, w, h, k = "w" }: { x: number; y: number; w: number; h: number; k?: "w" | "b" | "g" | "d" }) => (
  <rect x={x} y={y} width={w} height={h} fill={k === "b" ? sky : k === "g" ? fillGrey : "#fff"} stroke={k === "b" ? deep : k === "d" ? ink : grey} />
);
const bolt = <path d="M4 0H11L8 5H11L1 15L3 8H0Z" fill="#ffd28a" stroke="#d9730d" />;
const funnelShape = <path d="M12 12.500H23.500V14L19.500 18V24H16V18L12 14Z" fill="#fff" stroke={ink} strokeWidth="1.300" />;

const gallery: [string, React.ReactNode][] = [
  ["Stacked bar chart", <>{axis}<R x={2} y={3} w={4} h={5} /><R x={6.5} y={3} w={9} h={5} k="b" /><R x={2} y={13} w={8} h={5} /><R x={10} y={13} w={10.5} h={5} k="g" /></>],
  ["Stacked column chart", <>{axis}<R x={5} y={15} w={5} h={7} /><R x={5} y={6.5} w={5} h={8.5} k="b" /><R x={14.5} y={10} w={5.5} h={12} /><R x={14.5} y={2.5} w={5.5} h={7.5} k="g" /></>],
  ["Clustered bar chart", <>{axis}<R x={1.5} y={1.5} w={20} h={4.5} k="b" /><R x={1.5} y={6} w={11.5} h={4.5} k="d" /><R x={1.5} y={11} w={8.5} h={4.5} k="g" /><R x={1.5} y={15.5} w={15} h={4.5} k="d" /></>],
  ["Clustered column chart", <>{axis}<R x={2.5} y={1.5} w={4.5} h={20.5} k="b" /><R x={7} y={9.5} w={4.5} h={12.5} k="d" /><R x={12} y={13} w={4.5} h={9} k="g" /><R x={17} y={6.5} w={4.5} h={15.5} k="d" /></>],
  ["100% stacked bar chart", <>{axis}<R x={2} y={3} w={4} h={5.5} /><R x={6} y={3} w={14} h={5.5} k="b" /><R x={2} y={13} w={11.5} h={5} /><R x={13.5} y={13} w={6.5} h={5} k="g" /></>],
  ["100% stacked column chart", <>{axis}<R x={4.5} y={17} w={5.5} h={5} /><R x={4.5} y={2.5} w={5.5} h={14.5} k="b" /><R x={15} y={10} w={5} h={12} /><R x={15} y={2.5} w={5} h={7.5} k="g" /></>],
  ["Line chart", <>{axis}<path d="M2 17L8 11L12 13L17 6L22 12" stroke="#2b88d8" strokeWidth="1.500" /><path d="M2 12L9 5L16 11L22 4" stroke={ink} strokeWidth="1.500" /></>],
  ["Area chart", <><path d="M10 12L17.500 1L22.500 12V22.500H12Z" fill={fillGrey} stroke={grey} /><path d="M0.500 13L8 3L16 13L10 20Z" fill="#fff" stroke={ink} /><path d="M0.500 14L7 19L14 10L22.500 22.500H0.500Z" fill={sky} stroke={deep} /><path d="M0.500 13V22.500H23" stroke={ink} /></>],
  ["Stacked area chart", <><path d="M1 4L8 10L15 3L22.500 8V17L16 12L8 19L1 12Z" fill={sky} stroke={deep} /><path d="M1 13L8 19L16 12L22 17V22H1Z" fill="#fff" stroke="none" />{axis}</>],
  ["100% stacked area chart", <><path d="M1 1.500H22.500V17L17 12L8 20L1 14Z" fill={sky} stroke={deep} /><path d="M1 15L8 20L17 13L22 17V22H1Z" fill="#fff" stroke="none" />{axis}</>],
  ["Line and stacked column chart", <>{axis}<R x={5} y={2.5} w={5} h={12} k="b" /><R x={5} y={14.5} w={5} h={7.5} /><R x={15} y={2.5} w={5} h={7} k="g" /><R x={15} y={9.5} w={5} h={12.5} /><path d="M1 20L9 12L14 16L23 8" stroke={ink} strokeWidth="1.500" /></>],
  ["Line and clustered column chart", <>{axis}<R x={5} y={10.5} w={5} h={11.5} k="b" /><R x={15} y={6.5} w={5.5} h={15.5} k="g" /><R x={10} y={1.5} w={5} h={20.5} k="d" /><path d="M1 20L9 12L14 16L23 9" stroke={ink} strokeWidth="1.500" /></>],
  ["Ribbon chart", <><path d="M2 13H7L9 16H14L16 13H22V20H15L13 18H10L8 20H2Z" fill="#f7b65b" stroke="#d9730d" /><path d="M2 3Q10 8 14 5L22 2V8Q12 12 2 8Z" fill={fillGrey} stroke={grey} /><path d="M2 8Q6 8 9 13Q12 15 15 11Q18 7 22 8V13Q18 13 15 17Q11 21 7 17Q5 13 2 13Z" fill={sky} stroke={deep} />{axis}</>],
  ["Waterfall chart", <>{axis}<R x={3} y={7} w={5} h={15} k="d" /><R x={8} y={7} w={5} h={15} k="d" /><R x={13} y={3} w={3.5} h={10} k="b" /><R x={16.5} y={1.5} w={5} h={20.5} k="d" /></>],
  ["Funnel", <><R x={0.5} y={1.5} w={22} h={6} k="b" /><R x={4} y={7.5} w={15} h={7} k="b" /><R x={7.5} y={14.5} w={8} h={6.5} k="b" /></>],
  ["Scatter chart", <>{axis}<path d="M4 5H8V9H4ZM10 9H14V13H10ZM16 14H20V18H16Z" fill="#5ba7e6" /><path d="M16 1.500H20V5.500H16ZM4 15H8V19H4Z" fill={ink} /></>],
  ["Pie chart", <><circle cx="11.500" cy="11.500" r="11" fill="#fff" stroke={ink} /><path d="M11.500 0.500A11 11 0 0 1 18.500 20L11.500 12Z" fill={sky} stroke={deep} /></>],
  ["Donut chart", <><circle cx="11.500" cy="11.500" r="8" stroke={deep} strokeWidth="7" /><circle cx="11.500" cy="11.500" r="8" stroke={sky} strokeWidth="5" /><path d="M3.500 11.500A8 8 0 0 1 11.500 3.500" stroke={grey} strokeWidth="7" /><path d="M3.500 10.500A8 8 0 0 1 10.500 3.500" stroke="#fff" strokeWidth="5" /></>],
  ["Treemap", <><R x={0.5} y={0.5} w={10.5} h={22} k="b" /><path d="M0.500 12H11" stroke={deep} /><R x={11} y={0.5} w={11.5} h={6} k="d" /><R x={11} y={6.5} w={5} h={16} k="d" /><R x={16} y={6.5} w={6.5} h={8} k="d" /><R x={16} y={14.5} w={6.5} h={8} k="d" /></>],
  ["Map", <><circle cx="12.500" cy="9.500" r="7" fill="#fff" stroke={ink} strokeWidth="1.300" /><path d="M8 5Q11 2 14 4L12 8L9 9ZM14 8L19 6V12L16 11ZM10 11L14 11L14 15L12 15Z" fill="#2f9e4f" /><path d="M7 1Q1 6 5 14Q9 19 17 17.500M12 18V22M4 22H20" stroke={ink} strokeWidth="1.500" /></>],
  ["Filled map", <><path d="M1 1L8 2L12 3L16 1H22.500V14L17 16L12 21L5 18L1 10Z" fill={fillGrey} stroke={grey} /><path d="M1 1L9 2L8 10H2ZM12 12L22.500 10L20 17L17 20L11 19Z" fill={sky} stroke={deep} /></>],
  ["Azure map", <><path d="M15 0L2 22L13 16Z" fill="#3fa0d8" /><path d="M15 0L21 24L13 16Z" fill="#1a74c0" /></>],
  ["Gauge", <><path d="M0.500 17A11 11 0 0 1 22.500 17H17A5.500 5.500 0 0 0 6 17Z" fill="#fff" stroke={ink} /><path d="M8 6.500A11 11 0 0 1 22.500 17H17A5.500 5.500 0 0 0 10 12Z" fill={sky} stroke={deep} /><path d="M11 17L16 10" stroke={ink} strokeWidth="2" /></>],
  ["Card", <><R x={0.5} y={2.5} w={22} h={18} k="d" /><text x="11.500" y="14.500" textAnchor="middle" fontSize="10" fontFamily="Open Sans" fill="#2b88d8">123</text><path d="M3 17.500H20" stroke={grey} /></>],
  ["Multi-row card", <><R x={0.5} y={0.5} w={22} h={22} k="d" /><path d="M4.500 4V19M6 9.500H12M6 17.500H12" stroke={grey} /><path d="M6 6H18M6 14H19" stroke="#1f7fd0" strokeWidth="2" /></>],
  ["KPI", <><R x={0.5} y={2.5} w={22} h={17} k="d" /><path d="M3 13L7 6L11 13Z" fill="#4aa564" stroke="#2f7d45" /><path d="M12 6H20L16 12Z" fill="#e8504a" stroke="#c53030" /><path d="M3 16.500H20" stroke={grey} /></>],
  ["Slicer", <><R x={0.5} y={0.5} w={22} h={21.5} k="d" /><path d="M0.500 0.500H22.500V4H0.500Z" fill={fillGrey} stroke={ink} /><path d="M5 8.500H8.500V12H5ZM5 15H8.500V18.500H5Z" fill={fillGrey} stroke={grey} /><path d="M11 11H24V23H11Z" fill="#f3f2f1" />{funnelShape}</>],
  ["Table", <><R x={0.5} y={0.5} w={22} h={22} k="d" /><path d="M0.500 0.500H22.500V4H0.500Z" fill={fillGrey} stroke={ink} /><path d="M1 10H22M1 16H22M8 4V22M15 4V22" stroke={grey} /></>],
  ["Matrix", <><R x={0.5} y={0.5} w={22} h={22} k="d" /><path d="M15 4H22.500V22.500H1V16H15Z" fill={sky} /><path d="M0.500 0.500H22.500V4H0.500Z" fill={fillGrey} stroke={ink} /><path d="M1 10H22M1 16H22M8 4V22M15 4V22" stroke={deep} /><path d="M0.500 0.500H22.500V22.500H0.500Z" stroke={ink} /></>],
  ["R script visual", <text x="10" y="19" textAnchor="middle" fontSize="20" fontWeight="700" fontFamily="Open Sans" fill="#1f83c4">R</text>],
  ["Python visual", <text x="-1" y="17" fontSize="20" fontWeight="600" fontFamily="Open Sans" fill="#1f83c4">Py</text>],
  ["Key influencers", <>{axis}<path d="M1 4.500H16" stroke="#2b88d8" /><circle cx="18.500" cy="4.500" r="2.800" fill={sky} stroke={deep} /><path d="M1 10.500H12M1 16H8M12 9H15V12H12ZM8 14.500H11V17.500H8Z" stroke={grey} /></>],
  ["Decomposition tree", <><path d="M8 11H14M11 3.500V19M11 3.500H14M11 19H14" stroke={ink} strokeWidth="1.500" /><R x={0.5} y={8} w={7.5} h={5} k="b" /><R x={14.5} y={1} w={8} h={5} k="b" /><R x={14.5} y={8.5} w={8} h={5} k="b" /><R x={14.5} y={16} w={8} h={5.5} k="b" /></>],
  ["Q&A", <path d="M0.800 1.500H22.500V16H11L5 21V16H0.800Z" fill="#fff" stroke={deep} strokeWidth="1.400" />],
  ["Narrative", <><path d="M3 6V0.800H13L20 7V22.200H3V12M13 0.800V7H20" fill="#fff" stroke={ink} strokeWidth="1.300" /><circle cx="4" cy="9" r="2.300" fill="#fff" stroke={deep} /><path d="M9 10.500H17M7 14.500H14" stroke="#2b88d8" strokeWidth="1.300" /></>],
  ["Goals", <><path d="M5.500 3H1V8Q2 12 7 12M17.500 3H22V8Q21 12 16 12M5.500 3V10Q8 14.500 11.500 14.500Q15 14.500 17.500 10V3M11.500 15V19" fill="none" stroke={ink} strokeWidth="1.500" /><path d="M5.500 0.800H17.500V3.500H5.500ZM6 19.500H17V22.500H6Z" fill={sky} stroke={deep} /></>],
  ["Paginated report", <><path d="M2.500 0.500H13L20 7V24H2.500ZM13 0.500V7H20" fill="#fff" stroke={ink} strokeWidth="1.300" /><path d="M5 15H8V21.500H5ZM9.500 18H12.500V21.500H9.500ZM14 13H17V21.500H14Z" fill={ink} /></>],
  ["New card", <><R x={0.5} y={4} w={22} h={16.5} k="d" /><text x="13" y="15.500" textAnchor="middle" fontSize="10" fontFamily="Open Sans" fill="#2b88d8">123</text><path d="M3 18H20" stroke={grey} />{bolt}</>],
  ["New slicer", <><R x={1.5} y={13} w={8} h={8} /><R x={13} y={1.5} w={8} h={8} /><R x={4} y={4} w={6} h={6} k="b" />{bolt}{funnelShape}</>],
  ["ArcGIS map", <><path d="M1 1.500H22.500V22.500H1Z" fill={sky} stroke={deep} /><path d="M12 2H18L16 8L12 9L11 15L5 19V22L14 21L18 14L22 11V7L17 10Z" fill="#fff" stroke={deep} strokeWidth="0.700" /><path d="M0 0H7.500V7L4 12L0 7Z" fill="#d9730d" /><circle cx="4" cy="4" r="1.300" fill="#fff" /><circle cx="19.500" cy="20.500" r="3.500" fill="#d9730d" /><circle cx="22" cy="13.500" r="2" fill="#d9730d" /></>],
  ["Power Apps", <path d="M8 1.500L1 9Q-1 11.500 1 14L8 21.500L11.500 18L15 21.500L22 14Q24 11.500 22 9L15 1.500L11.500 5ZM4.500 12L12 4.500L19 12L12 19ZM8 8L15.500 15.500M15.500 8L8 15.500" stroke="#8c2fa0" strokeWidth="1.300" />],
  ["Power Automate", <path d="M1 1.500H14L22.500 10.500Q23 11.500 22.500 12.500L14 21.500H1L10 11.500ZM14 1.500L4 21M18.500 6L9.500 21.500M1 1.500L10 11.500" stroke="#1a7fd4" strokeWidth="1.300" />],
];

function Visualizations() {
  return (
    <aside className="flex w-[226px] shrink-0 flex-col border-r border-l border-[#e1dfdd] text-sm text-[#252423]">
      <div className="flex h-10 items-center justify-between pt-2.5 pr-1 pl-2.5">
        <h2 className="text-lg leading-7 font-semibold">Visualizations</h2>
        <button aria-label="Collapse Visualizations"><ChevronsRight size={29} strokeWidth={1.2} /></button>
      </div>
      <h3 className="pt-2 pl-2.5 leading-5 font-semibold">Build visual</h3>
      <div className="flex gap-12 pt-1 pl-2.5">
        <button aria-label="Build visual" className="flex h-10 w-10 items-center justify-center rounded-sm bg-[#d2d0ce]">
          <svg width="31" height="31" viewBox="0 0 31 31" stroke="#252423" strokeWidth="1.500"><path d="M0 1.500H24" /><path d="M1 7.500H30V16H1ZM1 21H30V30H1Z" fill="#117865" strokeDasharray="2 1" /></svg>
        </button>
        <button aria-label="Format visual" className="flex h-10 w-8 items-center justify-center">
          <svg width="31" height="31" viewBox="0 0 31 31" fill="none" stroke="#252423" strokeWidth="1.500"><path d="M6 29.500H1V1H13L22 10V14M13 1V10H22M30 12L19 22L22 25L30 12ZM19 22Q14 21 13 26Q12 29 8 29.500Q16 31 20 28L22 25" /></svg>
        </button>
      </div>
      <svg width="224" height="16" viewBox="0 0 224 16" className="w-full shrink-0" fill="none" stroke="#8a8886" preserveAspectRatio="xMinYMid slice"><path d="M0 15.500H20L30 6.500L40 15.500H400" /></svg>
      <div className="grid grid-cols-[repeat(6,35px)] auto-rows-[35px] pt-[14px] pl-3.5">
        {gallery.map(([name, art]) => (
          <button key={name} aria-label={name} className="flex items-start">
            <svg width="24" height="25" viewBox="0 0 24 25" fill="none" aria-hidden="true">{art}</svg>
          </button>
        ))}
      </div>
      <button aria-label="More visuals" className="mt-0.5 ml-4 flex h-4 w-6 items-center">
        <svg width="19" height="3" viewBox="0 0 19 3" fill="#252423"><path d="M0 0H2.500V2.500H0ZM8 0H10.500V2.500H8ZM15 0H17.500V2.500H15Z" /></svg>
      </button>
      <div className="mt-[17px] flex flex-col border-t border-[#e1dfdd] px-1.5 pt-2.5">
        <h3 className="pl-2 leading-5">Values</h3>
        <div className="mt-1.5 flex h-[35px] items-center rounded-sm border border-dashed border-[#c8c6c4] bg-white pl-3">Add data fields here</div>
        <h3 className="mt-3.5 pl-2 leading-5 font-semibold text-[#484644]">Drill through</h3>
        <div className="mt-[11px] flex h-5 items-center justify-between pr-5 pl-2">
          <span id="cross">Cross-report</span>
          <button role="switch" aria-checked="false" aria-labelledby="cross" className="flex h-5 w-10 items-center gap-0.5 rounded-full border border-[#797775] bg-white pl-1.5 text-[11px] text-[#605e5c]">
            <span className="h-2.5 w-2.5 rounded-full bg-[#605e5c]" />Off
          </button>
        </div>
        <div className="mt-3.5 flex h-5 items-center justify-between pr-5 pl-2">
          <span id="keep">Keep all filters</span>
          <button role="switch" aria-checked="true" aria-labelledby="keep" className="flex h-5 w-10 items-center gap-1 rounded-full bg-[#117865] pl-1.5 text-[11px] text-white">
            On<span className="h-2.5 w-2.5 rounded-full bg-white" />
          </button>
        </div>
        <div className="mt-3.5 flex h-8 items-center rounded-sm border border-dashed border-[#c8c6c4] bg-white pl-2.5 whitespace-nowrap">Add drill-through fields here</div>
      </div>
    </aside>
  );
}

function DataPane() {
  return (
    <aside className="flex w-56 shrink-0 flex-col text-sm text-[#252423]">
      <div className="flex h-10 items-center justify-between pt-2.5 pr-1 pl-2.5">
        <h2 className="text-lg leading-7 font-semibold">Data</h2>
        <button aria-label="Collapse Data"><ChevronsRight size={29} strokeWidth={1.2} /></button>
      </div>
      <label className="mt-[17px] mr-1 ml-1.5 flex h-[30px] items-center gap-2 rounded border border-[#d2d0ce] border-b-[#605e5c] bg-white pl-3">
        <Search size={20} strokeWidth={1.3} className="text-[#484644]" />
        <input type="search" placeholder="Search" aria-label="Search" className="w-32 min-w-0 bg-transparent text-base outline-none placeholder:text-[#605e5c]" />
      </label>
      <button className="mt-4 flex h-6 items-center gap-[3px] pl-3">
        <ChevronRight size={22} strokeWidth={1.2} />
        <svg width="16" height="16" viewBox="0 0 16 16" fill="none" stroke="#252423" strokeWidth="1.200"><rect x="1" y="1" width="14" height="14" rx="3" /><path d="M5.500 1V15M10.500 1V15M1 5.500H15M1 10.500H15" /></svg>
        <span className="pl-0.5">emp_attrition_csv</span>
      </button>
    </aside>
  );
}

function FiltersPane() {
  return (
    <aside className="flex w-[41px] shrink-0 flex-col items-center bg-white pt-2 text-[#252423]">
      <button aria-label="Expand Filters" className="mr-1"><ChevronsLeft size={29} strokeWidth={1.2} /></button>
      <svg width="15" height="16" viewBox="0 0 15 16" fill="none" stroke="#252423" strokeWidth="1.300" className="mt-3.5 ml-1"><path d="M14 1V15H12.500L7 10H1V6H7L12.500 1Z" /></svg>
      <h2 className="mt-3 text-lg leading-6 font-semibold [writing-mode:vertical-rl]">Filters</h2>
    </aside>
  );
}

function PageTabs() {
  return (
    <div className="flex h-11 shrink-0 items-stretch bg-[#f3f2f1] pl-12 text-[#252423]">
      <div className="flex w-40 border-r border-l border-[#b3b0ad] border-l-[#e1dfdd]">
        <button aria-label="Desktop layout" className="ml-3 flex h-[38px] w-[30px] flex-col items-center justify-between pt-2.5">
          <svg width="24" height="18" viewBox="0 0 24 18" fill="none" stroke={grey} strokeWidth="1.500"><path d="M1 1H23V14H1ZM12 14V17M8 17H16" /></svg>
          <span className="h-[3px] w-full rounded-full bg-[#117865]" />
        </button>
        <button aria-label="Mobile layout" className="ml-[31px] flex h-[38px] items-start pt-1.5">
          <svg width="16" height="25" viewBox="0 0 16 25" fill="none" stroke={grey} strokeWidth="1.500"><rect x="1" y="1" width="14" height="23" rx="2" /><path d="M6 20.500H10" /></svg>
        </button>
        <button aria-label="Previous page" className="ml-[26px] pb-1"><svg width="7" height="11" viewBox="0 0 7 11" fill="#c8c6c4"><path d="M7 0V11L0 5.500Z" /></svg></button>
        <button aria-label="Next page" className="ml-[21px] pb-1"><svg width="7" height="11" viewBox="0 0 7 11" fill="#c8c6c4"><path d="M0 0V11L7 5.500Z" /></svg></button>
      </div>
      <button className="w-[94px] border-b-[5px] border-[#117865] bg-white pt-1 text-sm">Page 1</button>
      <button aria-label="New page" className="flex w-[49px] items-center justify-center bg-[#117865] pb-1">
        <svg width="14" height="14" viewBox="0 0 14 14" stroke="#fff" strokeWidth="3.500"><path d="M7 0V14M0 7H14" /></svg>
      </button>
    </div>
  );
}

function StatusBar() {
  return (
    <footer className="h-[18px] shrink-0 overflow-hidden border-t border-[#e1dfdd] bg-[#f3f2f1] text-sm text-[#605e5c]">
      <div className="flex h-7 items-center">
        <span className="pl-0.5">Page 1 of 1</span>
        <div className="ml-auto flex items-center">
          <button aria-label="Zoom out" className="mr-[3px] w-3 text-lg leading-none">-</button>
          <span className="relative flex h-3 items-center">
            <input
              type="range" min={0} max={100} defaultValue={39} aria-label="Zoom"
              className="h-px w-[125px] appearance-none bg-[#605e5c] [&::-webkit-slider-thumb]:h-3 [&::-webkit-slider-thumb]:w-[5px] [&::-webkit-slider-thumb]:appearance-none [&::-webkit-slider-thumb]:bg-[#605e5c]"
            />
            <span className="absolute left-1/2 h-1.5 w-px bg-[#605e5c]" />
          </span>
          <button aria-label="Zoom in" className="mr-[5px] ml-1.5 w-3 text-lg leading-none">+</button>
          <span className="w-12 text-center">82%</span>
          <button aria-label="Fit to page" className="mr-[21px] ml-[15px]">
            <svg width="20" height="16" viewBox="0 0 20 16" fill="none" stroke={grey} strokeWidth="1.500"><path d="M1 1H19V15H1ZM4 6V4H7M13 4H16V6M4 10V12H7M13 12H16V10" /></svg>
          </button>
        </div>
      </div>
    </footer>
  );
}

export default function App() {
  return (
    <div className={`flex h-screen flex-col overflow-hidden bg-[#f3f2f1] ${SANS}`}>
      <Ribbon />
      <div className="flex min-h-0 flex-1">
        <div className="flex min-w-0 flex-1 flex-col">
          <div className="flex min-h-0 flex-1">
            <Rail />
            <Report />
            <FiltersPane />
          </div>
          <PageTabs />
        </div>
        <Visualizations />
        <DataPane />
      </div>
      <StatusBar />
    </div>
  );
}
